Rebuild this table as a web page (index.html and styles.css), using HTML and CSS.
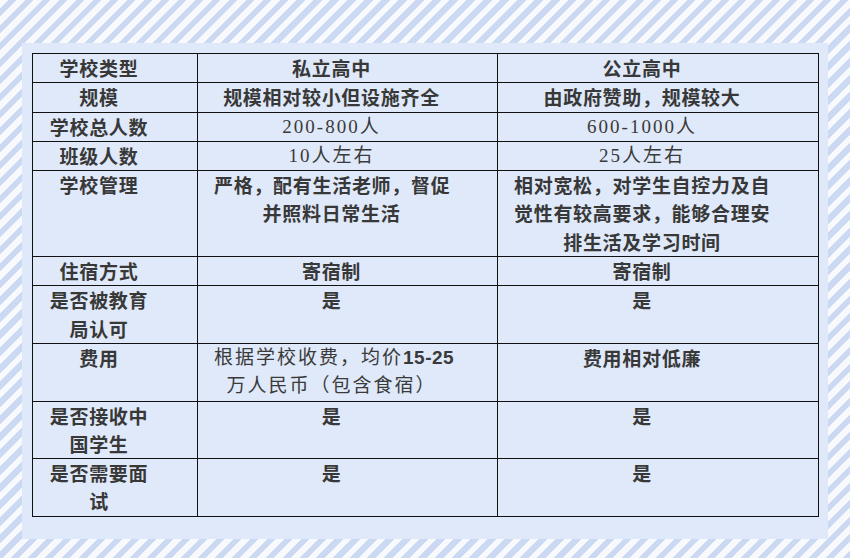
FILE: index.html
```html
<!DOCTYPE html>
<html lang="zh-CN">
<head>
<meta charset="utf-8">
<title>私立高中与公立高中对比</title>
<link rel="stylesheet" href="styles.css">
</head>
<body>
<div class="panel">
  <table class="cmp">
    <colgroup>
      <col class="c1"><col class="c2"><col class="c3">
    </colgroup>
    <tbody>
      <tr><td>学校类型</td><td>私立高中</td><td>公立高中</td></tr>
      <tr><td>规模</td><td>规模相对较小但设施齐全</td><td>由政府赞助，规模较大</td></tr>
      <tr><td>学校总人数</td><td class="serif">200-800人</td><td class="serif">600-1000人</td></tr>
      <tr><td>班级人数</td><td class="serif">10人左右</td><td class="serif">25人左右</td></tr>
      <tr><td>学校管理</td><td>严格，配有生活老师，督促<br>并照料日常生活</td><td>相对宽松，对学生自控力及自<br>觉性有较高要求，能够合理安<br>排生活及学习时间</td></tr>
      <tr><td>住宿方式</td><td>寄宿制</td><td>寄宿制</td></tr>
      <tr><td>是否被教育<br>局认可</td><td>是</td><td>是</td></tr>
      <tr><td>费用</td><td class="serif">根据学校收费，均价<b class="num">15-25</b><br>万人民币（包含食宿）</td><td>费用相对低廉</td></tr>
      <tr><td>是否接收中<br>国学生</td><td>是</td><td>是</td></tr>
      <tr><td>是否需要面<br>试</td><td>是</td><td>是</td></tr>
    </tbody>
  </table>
</div>
</body>
</html>
```

FILE: styles.css
```css
html, body {
  margin: 0;
  padding: 0;
}

body {
  width: 850px;
  height: 558px;
  overflow: hidden;
  padding: 43px 22px 0;
  box-sizing: border-box;
  background-color: #f7f9fd;
  background-image: repeating-linear-gradient(135deg,
    #f7f9fd 0px, #f7f9fd 6px,
    #cbdaf2 6px, #cbdaf2 12px);
}

.panel {
  width: 806px;
  box-sizing: border-box;
  background: #dfe9f9;
  padding: 10px 10px 22px;
}

.cmp {
  width: 786px;
  table-layout: fixed;
  border-collapse: collapse;
  background: #dfe9f9;
}

.c1 { width: 165px; }
.c2 { width: 300px; }
.c3 { width: 321px; }

.cmp td {
  border: 1px solid #111;
  padding: 0 48px 0 16px;
  vertical-align: top;
  text-align: center;
  font-family: "Noto Sans CJK SC", "Noto Sans", sans-serif;
  font-weight: 700;
  font-size: 19px;
  letter-spacing: 0.7px;
  line-height: 28.3px;
  color: #383838;
  white-space: nowrap;
}

.cmp td.serif {
  font-family: "Liberation Serif", "Noto Sans CJK SC", serif;
  font-weight: 400;
  letter-spacing: 2px;
  color: #3a3a3a;
}

.cmp .num {
  font-family: "Liberation Sans", "Noto Sans", sans-serif;
  font-weight: 700;
  letter-spacing: 0.5px;
}
```
